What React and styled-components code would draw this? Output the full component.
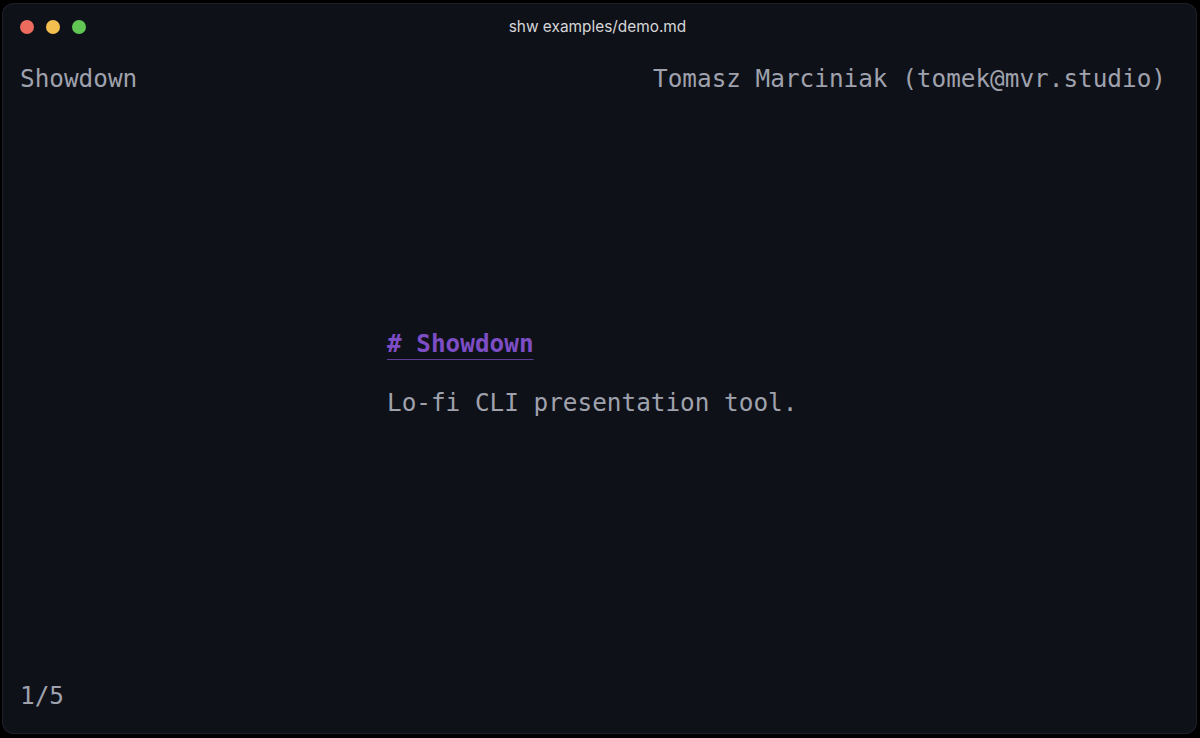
import React from 'react';
import styled, { createGlobalStyle } from 'styled-components';

const GlobalStyle = createGlobalStyle`
    html, body {
        margin: 0;
        padding: 0;
        background: #000;
        width: 1200px;
        height: 738px;
        overflow: hidden;
    }
`;

const Frame = styled.div`
    width: 1200px;
    height: 738px;
    padding: 3px 3px 4px 2px;
    box-sizing: border-box;
    background: #000;
`;

const Window = styled.div`
    height: 100%;
    display: flex;
    flex-direction: column;
    background: #0f1119;
    border-radius: 12px;
    box-shadow: inset 0 0 0 1px #1e2027;
    overflow: hidden;
`;

const TitleBar = styled.div`
    position: relative;
    height: 48px;
    flex: none;
    display: flex;
    align-items: center;
    justify-content: center;
`;

const Lights = styled.div`
    position: absolute;
    left: 18px;
    top: 17px;
    display: flex;
    gap: 12px;
`;

const Light = styled.span`
    width: 14px;
    height: 14px;
    border-radius: 50%;
    background: ${p => p.color};
`;

const Title = styled.div`
    font-family: Inter, "Liberation Sans", sans-serif;
    font-size: 15.4px;
    color: #d6d6d8;
    margin-top: -2px;
    margin-left: -4px;
`;

const Terminal = styled.div`
    flex: 1;
    display: flex;
    flex-direction: column;
    font-family: "DejaVu Sans Mono", monospace;
    font-size: 24.35px;
    line-height: 30px;
    color: #9fa2ad;
    padding: 13px 31px 23px 18px;
`;

const HeaderRow = styled.div`
    display: flex;
    justify-content: space-between;
`;

const Slide = styled.div`
    flex: 1;
    padding: 235px 0 0 367px;
    display: flex;
    flex-direction: column;
    gap: 29px;
`;

const Heading = styled.div`
    color: #7d4dc5;
    font-weight: bold;
    align-self: flex-start;
    text-decoration: underline;
    text-decoration-color: #5e3c99;
    text-decoration-thickness: 1px;
    text-underline-offset: 7px;
`;

const Paragraph = styled.div``;

const Footer = styled.div``;

export default function App() {
    return (
        <Frame>
            <GlobalStyle />
            <Window>
                <TitleBar>
                    <Lights>
                        <Light color="#ed6a5e" />
                        <Light color="#f5bf4f" />
                        <Light color="#61c554" />
                    </Lights>
                    <Title>shw examples/demo.md</Title>
                </TitleBar>
                <Terminal>
                    <HeaderRow>
                        <span>Showdown</span>
                        <span>Tomasz Marciniak (tomek@mvr.studio)</span>
                    </HeaderRow>
                    <Slide>
                        <Heading># Showdown</Heading>
                        <Paragraph>Lo-fi CLI presentation tool.</Paragraph>
                    </Slide>
                    <Footer>1/5</Footer>
                </Terminal>
            </Window>
        </Frame>
    );
}
